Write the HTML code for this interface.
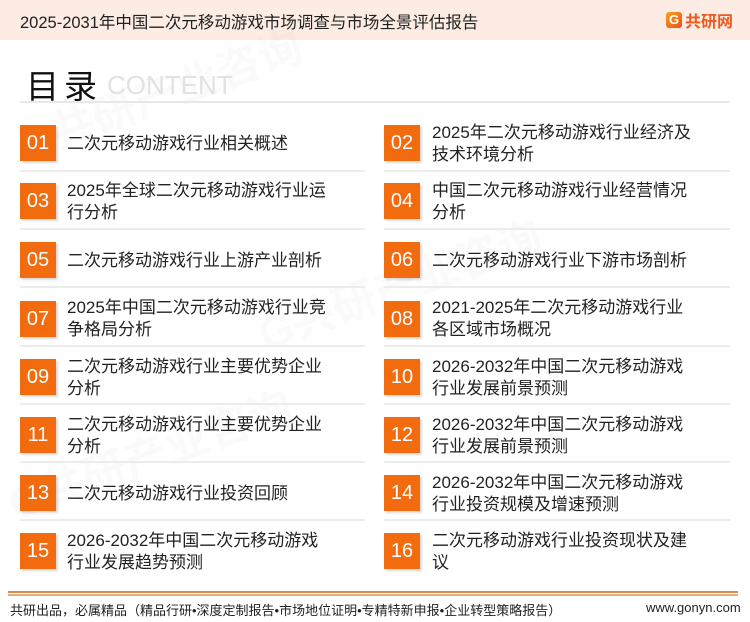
<!DOCTYPE html>
<html><head><meta charset="utf-8"><style>
*{margin:0;padding:0;box-sizing:border-box}
body{width:750px;height:622px;background:#fff;position:relative;overflow:hidden;font-family:"Liberation Sans","Noto Sans CJK SC",sans-serif;color:#222}
.hd{position:absolute;left:0;top:0;width:750px;height:40px;background:#fcece3}
.hd .t{position:absolute;left:20px;top:9px;font-size:16.5px;color:#222;white-space:nowrap}
.logo{position:absolute;left:666px;top:11px;height:18px;display:flex;align-items:center}
.logo .g{width:16px;height:16px;border-radius:3px;background:linear-gradient(135deg,#f7a21b,#ef4e1c);color:#fff;font-size:13px;font-weight:bold;line-height:16px;text-align:center;margin-right:3px}
.logo span{font-size:16px;font-weight:bold;color:#ec5a1f}
.ml{position:absolute;left:26px;top:60px;font-size:33px;color:#111;white-space:nowrap}
.ml b{font-weight:normal;display:inline-block;width:38px}
.ct{position:absolute;left:107px;top:70px;font-size:26px;color:#e2e2e2}
.hl{position:absolute;left:20px;top:101px;width:710px;height:2px;background:#e8e8e8}
.n{position:absolute;width:36px;height:36px;background:#f26b0f;color:#fff;font-size:20px;line-height:36px;text-align:center;box-shadow:2px 2px 2px rgba(0,0,0,.15)}
.x{position:absolute;font-size:17px;line-height:22px;color:#222;white-space:nowrap}
.s{position:absolute;height:2px;background:#ececec}
.fl{position:absolute;left:8px;width:730px;background:#d98a4e}
.ft{position:absolute;top:600px;font-size:13px;color:#222;white-space:nowrap}
.wm{position:absolute;color:rgba(0,0,0,.02);font-size:44px;font-weight:bold;transform:rotate(-20deg)}
</style></head><body>
<div class="hd"><div class="t">2025-2031年中国二次元移动游戏市场调查与市场全景评估报告</div>
<div class="logo"><div class="g">G</div><span>共研网</span></div></div>
<div class="wm" style="left:10px;top:60px">G共研产业咨询</div>
<div class="wm" style="left:250px;top:250px">G共研产业咨询</div>
<div class="wm" style="left:0;top:420px">G共研产业咨询</div>
<div class="ml"><b>目</b>录</div><div class="ct">CONTENT</div>
<div class="hl"></div>

<div class="n" style="left:20px;top:125px">01</div><div class="x" style="left:67px;top:133px">二次元移动游戏行业相关概述</div>
<div class="n" style="left:384px;top:125px">02</div><div class="x" style="left:432px;top:122px">2025年二次元移动游戏行业经济及<br>技术环境分析</div>
<div class="s" style="left:20px;top:170px;width:345px"></div><div class="s" style="left:384px;top:170px;width:346px"></div>

<div class="n" style="left:20px;top:183px">03</div><div class="x" style="left:67px;top:180px">2025年全球二次元移动游戏行业运<br>行分析</div>
<div class="n" style="left:384px;top:183px">04</div><div class="x" style="left:432px;top:180px">中国二次元移动游戏行业经营情况<br>分析</div>
<div class="s" style="left:20px;top:228px;width:345px"></div><div class="s" style="left:384px;top:228px;width:346px"></div>

<div class="n" style="left:20px;top:242px">05</div><div class="x" style="left:67px;top:250px">二次元移动游戏行业上游产业剖析</div>
<div class="n" style="left:384px;top:242px">06</div><div class="x" style="left:432px;top:250px">二次元移动游戏行业下游市场剖析</div>
<div class="s" style="left:20px;top:286px;width:345px"></div><div class="s" style="left:384px;top:286px;width:346px"></div>

<div class="n" style="left:20px;top:301px">07</div><div class="x" style="left:67px;top:297px">2025年中国二次元移动游戏行业竞<br>争格局分析</div>
<div class="n" style="left:384px;top:301px">08</div><div class="x" style="left:432px;top:297px">2021-2025年二次元移动游戏行业<br>各区域市场概况</div>
<div class="s" style="left:20px;top:345px;width:345px"></div><div class="s" style="left:384px;top:345px;width:346px"></div>

<div class="n" style="left:20px;top:359px">09</div><div class="x" style="left:67px;top:356px">二次元移动游戏行业主要优势企业<br>分析</div>
<div class="n" style="left:384px;top:359px">10</div><div class="x" style="left:432px;top:356px">2026-2032年中国二次元移动游戏<br>行业发展前景预测</div>
<div class="s" style="left:20px;top:403px;width:345px"></div><div class="s" style="left:384px;top:403px;width:346px"></div>

<div class="n" style="left:20px;top:417px">11</div><div class="x" style="left:67px;top:414px">二次元移动游戏行业主要优势企业<br>分析</div>
<div class="n" style="left:384px;top:417px">12</div><div class="x" style="left:432px;top:414px">2026-2032年中国二次元移动游戏<br>行业发展前景预测</div>
<div class="s" style="left:20px;top:461px;width:345px"></div><div class="s" style="left:384px;top:461px;width:346px"></div>

<div class="n" style="left:20px;top:475px">13</div><div class="x" style="left:67px;top:483px">二次元移动游戏行业投资回顾</div>
<div class="n" style="left:384px;top:475px">14</div><div class="x" style="left:432px;top:472px">2026-2032年中国二次元移动游戏<br>行业投资规模及增速预测</div>
<div class="s" style="left:20px;top:519px;width:345px"></div><div class="s" style="left:384px;top:519px;width:346px"></div>

<div class="n" style="left:20px;top:533px">15</div><div class="x" style="left:67px;top:530px">2026-2032年中国二次元移动游戏<br>行业发展趋势预测</div>
<div class="n" style="left:384px;top:533px">16</div><div class="x" style="left:432px;top:530px">二次元移动游戏行业投资现状及建<br>议</div>

<div class="fl" style="top:591px;height:2px"></div>
<div class="fl" style="top:594px;height:2px;opacity:.7"></div>
<div class="ft" style="left:10px">共研出品，必属精品（精品行研•深度定制报告•市场地位证明•专精特新申报•企业转型策略报告）</div>
<div class="ft" style="left:646px">www.gonyn.com</div>
</body></html>
